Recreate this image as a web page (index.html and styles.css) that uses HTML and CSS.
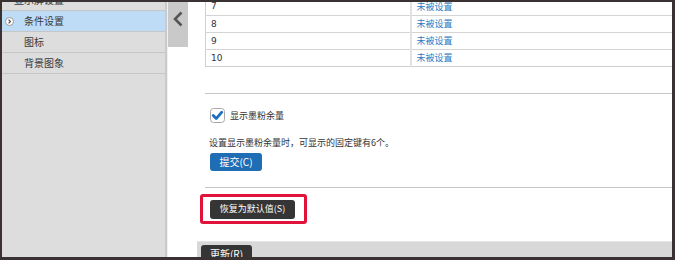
FILE: index.html
```html
<!DOCTYPE html>
<html lang="zh-CN">
<head>
<meta charset="utf-8">
<title>条件设置</title>
<link rel="stylesheet" href="styles.css">
</head>
<body>
<div class="frame">
  <aside class="sidebar">
    <ul class="menu">
      <li class="menu-item menu-parent">显示屏设置</li>
      <li class="menu-item active">
        <span class="bullet"><svg viewBox="0 0 9 9" width="9" height="9"><circle cx="4.5" cy="4.5" r="4" fill="#fff" stroke="#9a9a9a" stroke-width="1"/><path d="M3.6 2.6 L5.4 4.5 L3.6 6.4" fill="none" stroke="#555" stroke-width="1.3"/></svg></span>
        条件设置
      </li>
      <li class="menu-item">图标</li>
      <li class="menu-item">背景图象</li>
    </ul>
  </aside>
  <div class="rail">
    <button class="collapse" type="button" aria-label="收起">
      <svg viewBox="0 0 10 16" width="10" height="16"><path d="M8.5 1.5 L2 8 L8.5 14.5" fill="none" stroke="#555" stroke-width="2.6"/></svg>
    </button>
  </div>
  <main class="main">
    <div class="content">
      <table class="keys">
        <tr><td class="num">7</td><td class="val"><a href="#">未被设置</a></td></tr>
        <tr><td class="num">8</td><td class="val"><a href="#">未被设置</a></td></tr>
        <tr><td class="num">9</td><td class="val"><a href="#">未被设置</a></td></tr>
        <tr><td class="num">10</td><td class="val"><a href="#">未被设置</a></td></tr>
      </table>
      <div class="rule rule-first"></div>
      <label class="check">
        <span class="box"><svg viewBox="0 0 15 15" width="15" height="15"><rect x="0.5" y="0.5" width="14" height="14" rx="3" fill="#fff" stroke="#a8a8a8"/><path d="M3.2 7.6 L6.2 10.6 L11.8 4.2" fill="none" stroke="#1d6fbf" stroke-width="2.8" stroke-linecap="round" stroke-linejoin="round"/></svg></span>
        <span class="check-text">显示墨粉余量</span>
      </label>
      <p class="note">设置显示墨粉余量时，可显示的固定键有6个。</p>
      <button class="btn btn-blue" type="button">提交(C)</button>
      <div class="rule rule-second"></div>
      <div class="highlight">
        <button class="btn btn-dark btn-reset" type="button">恢复为默认值(S)</button>
      </div>
    </div>
    <div class="footer-bar">
      <button class="btn btn-dark btn-update" type="button">更新(R)</button>
    </div>
  </main>
</div>
</body>
</html>
```

FILE: styles.css
```css
* { box-sizing: border-box; }

html, body {
  margin: 0;
  padding: 0;
  background: #fff;
}

body {
  font-family: "Noto Sans CJK SC", "Noto Sans", sans-serif;
  color: #333;
}

.frame {
  width: 675px;
  height: 260px;
  border: 2px solid #3a3232;
  border-right-width: 3px;
  border-bottom-width: 3px;
  display: flex;
  overflow: hidden;
  background: #fff;
}

/* sidebar */
.sidebar {
  width: 165px;
  flex: 0 0 165px;
  background: #dddddd;
  border-right: 2px solid #cacaca;
  overflow: hidden;
}

.menu {
  list-style: none;
  margin: -12px 0 0 0;
  padding: 0;
}

.menu-item {
  height: 21px;
  border-bottom: 1px solid #c6c6c6;
  padding-left: 22px;
  display: flex;
  align-items: center;
  font-size: 10px;
  line-height: 20px;
  color: #3a3a3a;
  position: relative;
}

.menu-parent {
  padding-left: 12px;
}

.menu-item.active {
  background: #bedcf6;
}

.bullet {
  position: absolute;
  left: 3px;
  top: 6px;
  width: 9px;
  height: 9px;
  display: block;
}

.bullet svg { display: block; }

/* collapse rail */
.rail {
  width: 21px;
  flex: 0 0 21px;
  background: #fff;
  border-left: 1px solid #f0f0f0;
}

.collapse {
  display: flex;
  align-items: flex-start;
  justify-content: center;
  width: 20px;
  height: 45px;
  margin: 0;
  padding: 9px 0 0 0;
  border: 0;
  background: #c9c9c9;
}

.collapse svg { display: block; }

/* main */
.main {
  flex: 1 1 auto;
  min-width: 0;
  display: flex;
  flex-direction: column;
  overflow: hidden;
}

.content {
  flex: 0 0 auto;
  padding-left: 17px;
}

.keys {
  width: 100%;
  margin-top: -4px;
  border-collapse: collapse;
  border-left: 1px solid #d0d0d0;
  font-size: 9px;
}

.keys td {
  height: 17px;
  padding: 0;
  border-bottom: 1px solid #d4d4d4;
  vertical-align: middle;
}

.keys tr:last-child td {
  border-bottom-color: #cfcfcf;
}

.keys .num {
  width: 205px;
  padding-left: 5px;
  font-family: "DejaVu Sans", Verdana, sans-serif;
  font-size: 9px;
  color: #333;
  border-right: 2px solid #e2e2e2;
}

.keys .val {
  padding-left: 5px;
}

.keys a {
  color: #2c79c3;
  text-decoration: none;
  font-family: "Noto Sans CJK SC", sans-serif;
  font-size: 9px;
}

.rule {
  height: 0;
  border-top: 1px solid #c6c6c6;
}

.rule-first { margin-top: 26px; }

.check {
  display: flex;
  align-items: center;
  gap: 5px;
  margin-top: 14px;
  padding-left: 5px;
  height: 16px;
}

.box { display: block; width: 15px; height: 15px; }
.box svg { display: block; }

.check-text {
  font-size: 9px;
  color: #333;
}

.note {
  margin: 12px 0 0 0;
  padding-left: 4px;
  font-size: 9px;
  line-height: 14px;
  color: #333;
}

.btn {
  display: flex;
  align-items: center;
  justify-content: center;
  border: 0;
  border-radius: 3px;
  color: #fff;
  font-family: "Noto Sans CJK SC", sans-serif;
  font-size: 9px;
  line-height: 12px;
  padding: 0;
  margin: 0;
}

.btn-blue {
  margin-top: 3px;
  margin-left: 5px;
  width: 52px;
  height: 18px;
  background: #1f6db5;
  font-size: 10px;
}

.rule-second { margin-top: 16px; }

.highlight {
  display: flex;
  width: 107px;
  margin-top: 6px;
  margin-left: -5px;
  padding: 3px 9px 2px 7px;
  border: 3px solid #e2133b;
  border-radius: 3px;
}

.btn-dark {
  background: #353535;
}

.btn-reset {
  width: 85px;
  height: 19px;
  font-size: 9px;
}

.footer-bar {
  flex: 0 0 40px;
  margin-top: 17px;
  margin-left: 9px;
  background: #d8d8d8;
  border-top: 1px solid #e4e4e4;
  padding: 3px 0 0 4px;
}

.btn-update {
  width: 51px;
  height: 18px;
  font-size: 10px;
}
```
